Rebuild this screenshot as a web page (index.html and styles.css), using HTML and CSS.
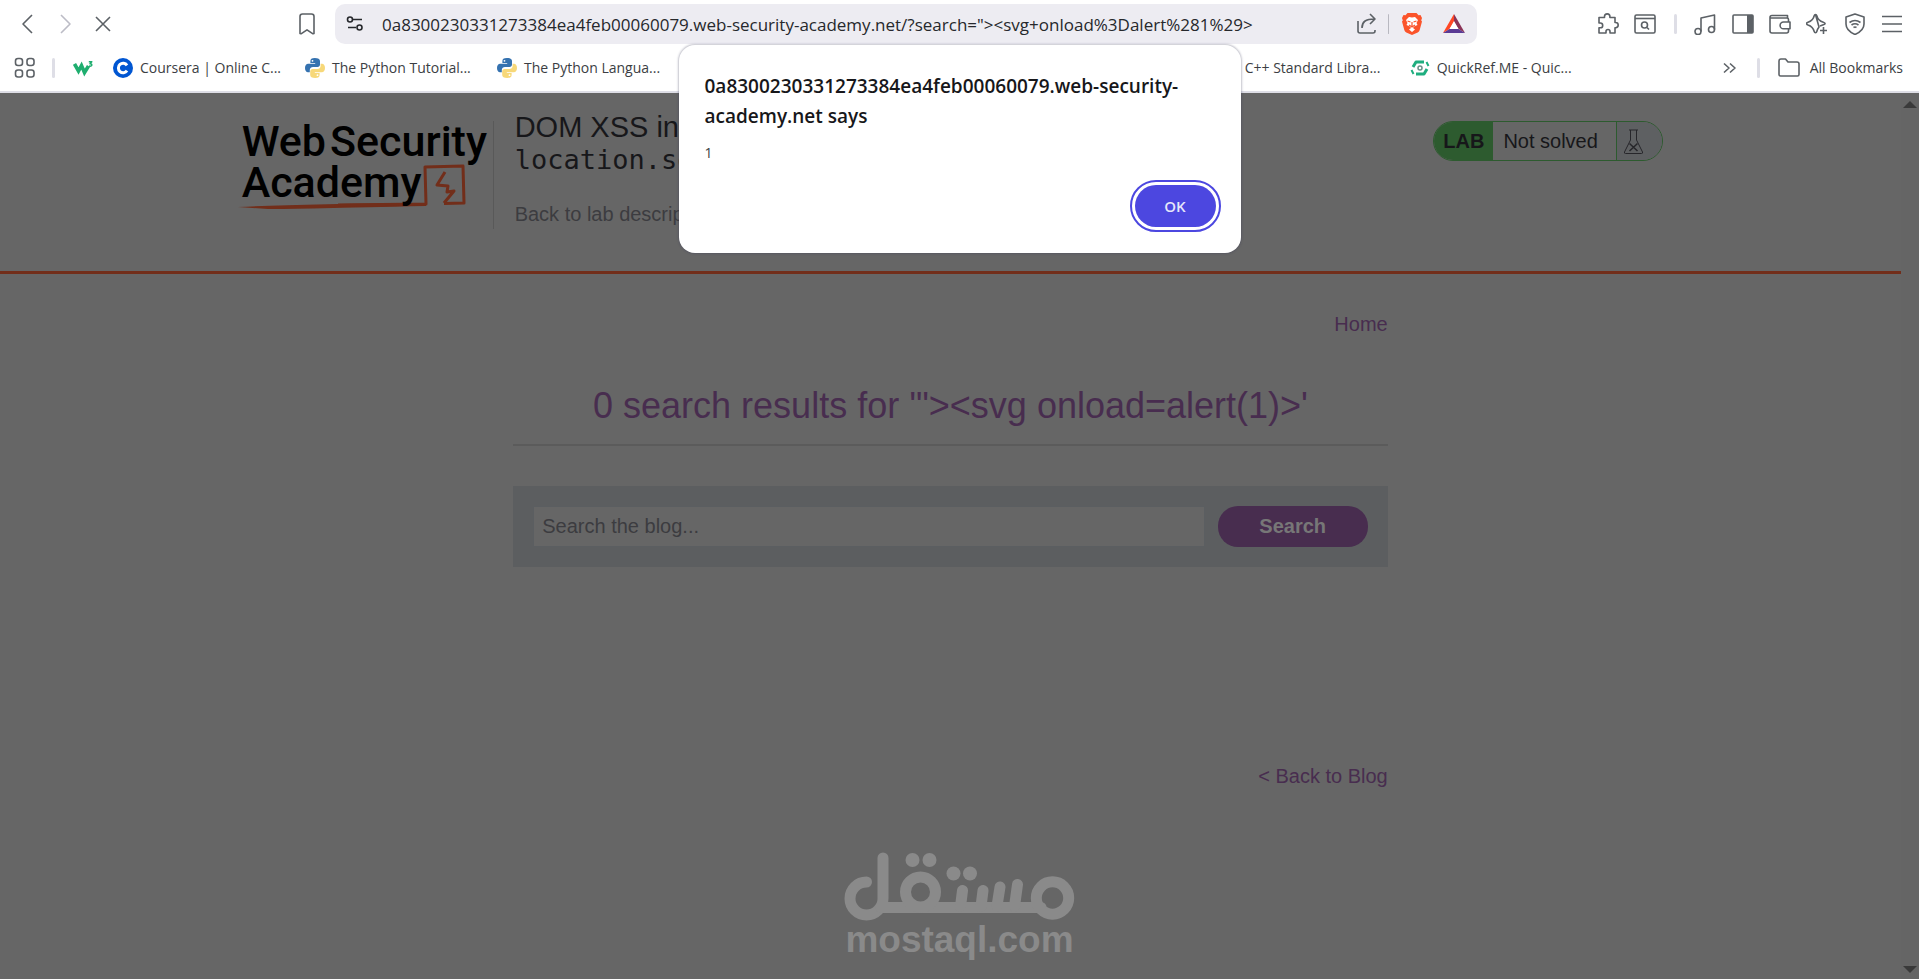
FILE: index.html
```html
<!DOCTYPE html>
<html lang="en">
<head>
  <meta charset="UTF-8">
  <meta name="viewport" content="width=device-width, initial-scale=1.0">
  <title>DOM XSS lab</title>
  <link rel="stylesheet" href="styles.css">
</head>
<body>
  <svg class="defs" width="0" height="0" aria-hidden="true">
    <symbol id="python" viewBox="0 0 20 20">
      <path fill="#3572b0" d="M9.8 0C6.5 0 5.4 1.2 5.4 3v2h4.8v.8H3.2C1.2 5.8 0 7.4 0 10s1.200 4.300 3 4.300h1.800V12c0-1.800 1.500-3 3.200-3h4.600c1.400 0 2.400-1.100 2.400-2.500V3c0-2-1.900-3-5.200-3z"/>
      <path fill="#f7d879" d="M10.200 20c3.300 0 4.400-1.200 4.400-3v-2H9.800v-.8h7c2 0 3.200-1.600 3.200-4.200s-1.200-4.300-3-4.300h-1.400V8c0 1.800-1.500 3-3.200 3H7.600c-1.400 0-2.400 1.100-2.400 2.500V17c0 2 1.700 3 5 3z"/>
      <circle cx="7.500" cy="2.800" r=".9" fill="#fff"/><circle cx="12.500" cy="17.200" r=".9" fill="#fff"/>
    </symbol>
  </svg>

  <header class="browser">
    <div class="toolbar">
      <div class="nav">
        <button class="icon-btn" aria-label="Back"><svg viewBox="0 0 22 22"><path d="M16 2L7 11l9 9"/></svg></button>
        <button class="icon-btn faded" aria-label="Forward"><svg viewBox="0 0 22 22"><path d="M7 2l9 9-9 9"/></svg></button>
        <button class="icon-btn" aria-label="Stop"><svg viewBox="0 0 22 22"><path d="M4 4l14 14M18 4L4 18"/></svg></button>
      </div>
      <button class="icon-btn" aria-label="Bookmark this page"><svg viewBox="0 0 22 22"><path d="M4 3.500Q4 1 6.500 1h9Q18 1 18 3.500V20.500l-1 .3-6-4-6 4-1-.3z"/></svg></button>
      <div class="omnibox">
        <button class="icon-btn dark" aria-label="Site information"><svg viewBox="0 0 22 22"><circle cx="6" cy="6.500" r="2.500"/><path d="M9 6.500h9M4 14.500h8"/><circle cx="15.500" cy="14.500" r="2.500"/></svg></button>
        <input class="url" type="text" aria-label="Address" value="0a8300230331273384ea4feb00060079.web-security-academy.net/?search=&quot;&gt;&lt;svg+onload%3Dalert%281%29&gt;">
        <button class="icon-btn" aria-label="Share"><svg viewBox="0 0 22 22"><path d="M2 8v10q0 2 2 2h13q2 0 2-2v-1M6 15C6 9 9 6 19 6M14 1l5 5-5 5"/></svg></button>
        <span class="sep grey"></span>
        <button class="icon-btn shields" aria-label="Brave Shields"><svg viewBox="0 0 22 22"><path class="solid" fill="#fb542b" d="M6.500 0h9l2 2.200 2-.2 1.500 3-.8 2.500.8 1-2.300 8.500q-.5 1.500-2 2.500L11 22l-5.700-2.500q-1.500-1-2-2.500L1 8.500l.8-1L1 5l1.500-3 2 .2z"/><path class="solid" fill="#fff" d="M11 4.500l3-.5 3 3-1.500 3 1 2-3.500 1.500-1 1.500 2 1.500L11 19l-3-2.500L10 15l-1-1.500L5.500 12l1-2L5 7l3-3z"/><path stroke="#fb542b" stroke-width="1.200" d="M6.500 8l3 1M15.500 8l-3 1M11 9v4M8 12l3 2 3-2"/></svg></button>
        <button class="icon-btn" aria-label="Brave Rewards"><svg viewBox="0 0 22 22"><path class="solid" fill="#ff4724" d="M11 1v8L6.500 16 0 20z"/><path class="solid" fill="#8a3357" d="M11 1l11 19-6.500-4L11 9z"/><path class="solid" fill="#5a3a94" d="M0 20l6.500-4h9l6.500 4z"/><path class="solid" fill="#fff" d="M11 8l4.500 8h-9z"/></svg></button>
      </div>
      <div class="tools">
        <button class="icon-btn" aria-label="Extensions"><svg viewBox="0 0 22 22"><path d="M2 4.500h5.500V3.600a2.700 2.700 0 0 1 5.400 0v.9H18v5h.6a2.600 2.600 0 0 1 0 5.200H18V20h-5v-1.500a2 2 0 0 0-4 0V20H2v-5.200h1.300a2.300 2.300 0 0 0 0-4.800H2z"/></svg></button>
        <button class="icon-btn" aria-label="Search in page"><svg viewBox="0 0 22 22"><rect x="1" y="2" width="20" height="18" rx="1.500"/><path d="M1 5.500h20"/><circle cx="10.500" cy="12" r="3"/><path d="M13 14.500l2 2"/></svg></button>
        <span class="sep"></span>
        <button class="icon-btn" aria-label="Playlist"><svg viewBox="0 0 22 22"><circle cx="4" cy="18.500" r="3"/><circle cx="17.500" cy="16.500" r="3"/><path d="M7 18.500V5L20.500 2v14.500"/></svg></button>
        <button class="icon-btn" aria-label="Sidebar"><svg viewBox="0 0 22 22"><rect x="1" y="2" width="20" height="18" rx="1"/><path class="solid" fill="#5c6166" d="M15 2h6v18h-6z"/></svg></button>
        <button class="icon-btn" aria-label="Wallet"><svg viewBox="0 0 22 22"><path d="M18.500 5V2.500H3Q1 2.500 1 4.500V18q0 2 2 2h14.500q2 0 2-2v-2M1 5h17q1.500 0 1.500 1.500V9"/><path d="M21 9h-6.500a3.300 3.300 0 0 0 0 6.800H21z"/></svg></button>
        <button class="icon-btn" aria-label="Leo AI"><svg viewBox="0 0 22 22"><path d="M9.500 1.500q1 0 1.300 1.200 1.200 5 6.500 6.500 1.800.6 1.800 1.300t-1.800 1.300L14 13M13 14q-1.500 2-2.200 4.500-.3 1.200-1.300 1.200t-1.300-1.200Q7 13.500 2 11.900q-1.500-.6-1.500-1.400T2 9.200q5-1.500 6.200-6.500Q8.500 1.500 9.500 1.500z"/><path d="M17.500 14v7M14 17.500h7"/></svg></button>
        <button class="icon-btn" aria-label="VPN"><svg viewBox="0 0 22 22"><path d="M11 1l9 3v7q0 6.500-9 10.500Q2 17.500 2 11V4z"/><path d="M5.500 9.500q5.500-4 11 0M7.500 12q3.500-2.500 7 0M9.500 14.500q1.500-1 3 0"/></svg></button>
        <button class="icon-btn" aria-label="Menu"><svg viewBox="0 0 22 22"><path d="M1 3.500h20M1 11h20M1 18.500h20"/></svg></button>
      </div>
    </div>

    <nav class="bookmarks" aria-label="Bookmarks">
      <button class="icon-btn" aria-label="Apps"><svg viewBox="0 0 22 22"><rect x="1.500" y="1.500" width="7" height="7" rx="2.500"/><rect x="13" y="1.500" width="7" height="7" rx="2.500"/><rect x="1.500" y="13" width="7" height="7" rx="2.500"/><rect x="13" y="13" width="7" height="7" rx="2.500"/></svg></button>
      <span class="sep"></span>
      <a class="bookmark" href="#" aria-label="W3Schools"><svg viewBox="0 0 20 20"><path stroke="#1fae6f" stroke-width="3.600" stroke-linejoin="miter" d="M1.500 6l4 7 3-5.500 3 7 4-6.500"/><path stroke="#1fae6f" stroke-width="1.500" d="M15.800 3.800h3l-1.800 2q2 0 1.800 1.500-.5 1.200-2.800.7"/></svg></a>
      <a class="bookmark" href="#"><svg viewBox="0 0 20 20"><circle cx="10" cy="10" r="10" fill="#0056d2"/><path stroke="#fff" stroke-width="3" d="M14 7.400a4.700 4.700 0 1 0 0 5.200"/></svg><span>Coursera | Online C...</span></a>
      <a class="bookmark" href="#"><svg><use href="#python"/></svg><span>The Python Tutorial...</span></a>
      <a class="bookmark" href="#"><svg><use href="#python"/></svg><span>The Python Langua...</span></a>
      <a class="bookmark push" href="#"><span>C++ Standard Libra...</span></a>
      <a class="bookmark" href="#"><svg viewBox="0 0 20 20"><path stroke="#1fae7f" stroke-width="3" d="M3 9l3-5h8M17 11l-3 5H6"/><path stroke="#1fae7f" stroke-width="2" d="M1.500 12l2 4M18.500 8l-2-4"/><circle cx="10" cy="10" r="2" stroke="#6a8f88" stroke-width="1.500"/></svg><span>QuickRef.ME - Quic...</span></a>
      <button class="icon-btn more" aria-label="More bookmarks"><svg viewBox="0 0 22 22"><path d="M5 6.500L10 11l-5 4.500M11 6.500l5 4.500-5 4.500"/></svg></button>
      <span class="sep"></span>
      <a class="bookmark all" href="#"><svg viewBox="0 0 22 22"><path stroke="#5c6166" stroke-width="1.600" d="M1 4q0-2 2-2h4.500l2.500 3h9q2 0 2 2v10.500q0 1.500-1.500 1.500h-17Q1 19 1 17.500z"/></svg><span>All Bookmarks</span></a>
    </nav>
  </header>

  <div class="viewport">
    <main class="page">
      <section class="lab-header">
        <div class="container lab-row">
          <a class="logo" href="#">
            <span class="logo-row"><span>Web</span><span>Security</span></span>
            <span class="logo-row">Academy</span>
            <svg class="logo-mark" viewBox="0 0 232 48" aria-hidden="true"><path class="solid" fill="#722e1a" d="M0 43Q60 40 188 39v3Q60 45 30 45z"/><path stroke="#722e1a" stroke-width="3" d="M100 41L188 40 187 3l38-1 1 37-20 .5"/><path stroke="#722e1a" stroke-width="3" d="M207 8l-8 13 11 1-1 6 7-1-10 12"/></svg>
          </a>
          <div class="lab-title">
            <h2>DOM XSS in<br><code>location.search</code></h2>
            <a href="#">Back to lab description</a>
          </div>
          <div class="status">
            <b>LAB</b>
            <span>Not solved</span>
            <i><svg viewBox="0 0 22 28" aria-hidden="true"><path d="M6 2h9M7.500 2v10L1.500 24q-.5 1.500 1 1.500h16q1.500 0 1-1.500l-6-12V2"/><path stroke-width="1.500" d="M6.500 15.500l8 7.500M14.500 15.500l-8 7.500"/></svg></i>
          </div>
        </div>
      </section>

      <section class="blog">
        <a class="home" href="#">Home</a>
        <h1>0 search results for '"&gt;&lt;svg onload=alert(1)&gt;'</h1>
        <form class="search">
          <input type="text" placeholder="Search the blog..." aria-label="Search the blog">
          <button type="button">Search</button>
        </form>
        <a class="back" href="#">&lt; Back to Blog</a>
      </section>
    </main>
    <div class="scrollbar" aria-hidden="true">
      <span class="up"></span>
      <span class="down"></span>
    </div>

    <div class="watermark">
      <svg viewBox="0 0 232 72" role="img" aria-label="مستقل">
        <path d="M39 7v40.500A16.500 16.500 0 1 1 22.500 31"/>
        <path d="M37 56.500h160"/>
        <circle cx="208.500" cy="47" r="16.200"/>
        <circle cx="76.500" cy="41" r="15"/>
        <path d="M118.500 39.500l-2 16M139 39.500l-2 16M156 36l-3 19M173.500 33.500l-3 22"/>
        <g class="dots"><circle cx="68.500" cy="9" r="7"/><circle cx="85.500" cy="9" r="7"/><circle cx="109.500" cy="22.500" r="7"/><circle cx="126" cy="22.500" r="7"/></g>
      </svg>
      <span>mostaql.com</span>
    </div>
  </div>

  <div class="dialog" role="alertdialog" aria-labelledby="dialogTitle" aria-describedby="dialogText">
    <h3 id="dialogTitle">0a8300230331273384ea4feb00060079.web-security-academy.net says</h3>
    <p id="dialogText">1</p>
    <button>OK</button>
  </div>
</body>
</html>
```

FILE: styles.css
```css
* { margin: 0; padding: 0; box-sizing: border-box; }
body {
  height: 100vh;
  display: flex;
  flex-direction: column;
  overflow: hidden;
  position: relative;
  background: #666;
  font-family: "Liberation Sans", Arial, sans-serif;
}
a { text-decoration: none; color: inherit; }
button, input { font: inherit; border: none; background: none; }
svg { display: block; fill: none; stroke-linejoin: round; }
.solid { stroke: none; }
.defs { position: absolute; }

/* browser chrome */
.browser {
  background: #fff;
  border-bottom: 2px solid #dedee6;
  font-family: "Open Sans", "Noto Sans", sans-serif;
  color: #3b3e43;
}
.toolbar {
  display: flex;
  align-items: center;
  height: 48px;
  padding: 4px 16px 4px 16px;
}
.icon-btn {
  width: 22px;
  height: 22px;
  flex: none;
  stroke: #5c6166;
  stroke-width: 1.6;
}
.icon-btn svg { width: 22px; height: 22px; }
.faded { stroke: #bcbcc6; }
.dark { stroke: #26282c; }
.nav {
  display: flex;
  gap: 16px;
  width: 280px;
}
.omnibox {
  flex: 1;
  display: flex;
  align-items: center;
  gap: 10px;
  height: 40px;
  margin-left: 17px;
  padding: 0 12px 0 9px;
  border-radius: 10px;
  background: #edecf2;
}
.omnibox .shields { margin-right: 10px; }
.url {
  flex: 1;
  min-width: 0;
  height: 32px;
  padding-left: 6px;
  font-size: 17px;
  color: #26282c;
}
.sep {
  width: 3px;
  height: 20px;
  border-radius: 2px;
  background: #dedee6;
}
.sep.grey { width: 1px; background: #b8b8c0; margin-right: 2px; }
.tools {
  display: flex;
  align-items: center;
  justify-content: space-between;
  width: 306px;
  margin-left: 120px;
}
.tools .sep { margin: 0 2px; }
.bookmarks {
  display: flex;
  align-items: center;
  height: 43px;
  padding: 0 16px 4px 14px;
}
.bookmarks .sep { margin: 0 18px 0 16px; }
.bookmark {
  display: flex;
  align-items: center;
  gap: 7px;
  margin-right: 25px;
  font-size: 14px;
  white-space: nowrap;
}
.bookmark:first-of-type { margin-right: 20px; }
.bookmark svg { width: 20px; height: 20px; }
.bookmark span { width: 140px; }
.push { margin-left: auto; }
.more { margin-left: 117px; }
.bookmark.all { margin-right: 0; gap: 10px; }
.bookmark.all svg { width: 22px; height: 22px; }
.bookmark.all span { width: auto; }

/* lab page */
.viewport {
  flex: 1;
  display: flex;
  position: relative;
}
.page { flex: 1; }
.container { width: 75%; margin: 0 auto; }
.lab-header {
  height: 181px;
  border-bottom: 3px solid #722e1a;
}
.lab-row {
  display: flex;
  align-items: flex-start;
  padding-top: 16px;
}
.logo {
  display: flex;
  flex-direction: column;
  width: 256px;
  height: 108px;
  margin-top: 12px;
  padding-left: 4px;
  border-right: 1px solid #595959;
  font-family: Roboto, sans-serif;
  font-weight: 500;
  font-size: 43px;
  line-height: 41px;
  color: #000;
  position: relative;
  white-space: nowrap;
}
.logo-mark {
  position: absolute;
  left: 0;
  top: 43px;
  width: 232px;
  height: 48px;
}
.logo-row { display: flex; gap: 4px; z-index: 1; }
.lab-title {
  flex: 1;
  padding: 2px 0 0 21px;
  color: #17171a;
}
.lab-title h2 {
  font-size: 29px;
  font-weight: normal;
  line-height: 32px;
}
.lab-title code { font-family: "DejaVu Sans Mono", monospace; font-size: 27px; }
.lab-title a {
  display: block;
  margin-top: 26px;
  font-size: 20px;
  line-height: 24px;
  color: #3c3c40;
}
.status {
  display: flex;
  align-items: center;
  height: 40px;
  margin-top: 12px;
  border: 1px solid #2d5b2f;
  border-radius: 20px;
  overflow: hidden;
  font-size: 20px;
  line-height: 38px;
  color: #17171a;
}
.status b { padding: 0 9px; background: #2d5b2f; }
.status span { width: 124px; padding-left: 10px; border-right: 1px solid #2d5b2f; }
.status i { width: 45px; height: 38px; padding: 6px; background: #5e6062; }
.status svg { width: 22px; height: 28px; stroke: #26262a; stroke-width: 1; }
.blog {
  display: flex;
  flex-direction: column;
  width: 46%;
  margin: 0 auto;
  font-size: 20px;
  color: #482d4f;
}
.home, .back { align-self: flex-end; line-height: 24px; }
.home { margin-top: 38px; }
.blog h1 {
  margin-top: 46px;
  padding-bottom: 14px;
  border-bottom: 2px solid #5b5b5b;
  font-size: 36px;
  line-height: 48px;
  font-weight: normal;
  text-align: center;
}
.search {
  display: flex;
  gap: 13px;
  margin-top: 40px;
  padding: 20px;
  background: #5c5e60;
}
.search input {
  flex: 1;
  height: 41px;
  padding: 0 8px;
  border: 1px solid #5b5e61;
  background: #666;
}
.search input::placeholder { color: #3c3c40; }
.search button {
  width: 150px;
  height: 41px;
  border-radius: 20px;
  background: #482d4f;
  color: #777;
  font-weight: bold;
}
.back { margin-top: 197px; }
.scrollbar {
  display: flex;
  flex-direction: column;
  justify-content: space-between;
  width: 18px;
  padding: 8px 2px 6px;
  background: #656565;
}
.up, .down {
  border: 7px solid transparent;
  border-top-width: 0;
  border-bottom: 7px solid #3a3a3a;
}
.down { transform: rotate(180deg); }
.watermark {
  position: absolute;
  bottom: 22px;
  left: 0;
  right: 0;
  display: flex;
  flex-direction: column;
  align-items: center;
  font-size: 37px;
  line-height: 34px;
  font-weight: bold;
  color: #8a8a8a;
}
.watermark svg {
  width: 232px;
  height: 72px;
  stroke: #8a8a8a;
  stroke-width: 11;
  stroke-linecap: round;
}
.watermark .dots { fill: #8a8a8a; stroke: none; }

/* alert box */
.dialog {
  position: absolute;
  top: 45px;
  left: 50%;
  transform: translateX(-50%);
  display: flex;
  flex-direction: column;
  width: 562px;
  padding: 26px 25px 26px 26px;
  border-radius: 16px;
  background: #fff;
  box-shadow: 0 0 2px 1px rgba(60, 60, 90, 0.3);
  font-family: "Open Sans", "Noto Sans", sans-serif;
  color: #17171a;
}
.dialog h3 {
  max-width: 490px;
  font-size: 19px;
  font-weight: 600;
  line-height: 30px;
}
.dialog p { margin-top: 12px; font-size: 14px; line-height: 20px; color: #3b3e43; }
.dialog button {
  align-self: flex-end;
  width: 81px;
  height: 42px;
  margin-top: 22px;
  border-radius: 21px;
  background: #4c47e0;
  outline: 2px solid #4c47e0;
  outline-offset: 3px;
  color: #e6e6fa;
  font-size: 15px;
  font-weight: 600;
}
```
